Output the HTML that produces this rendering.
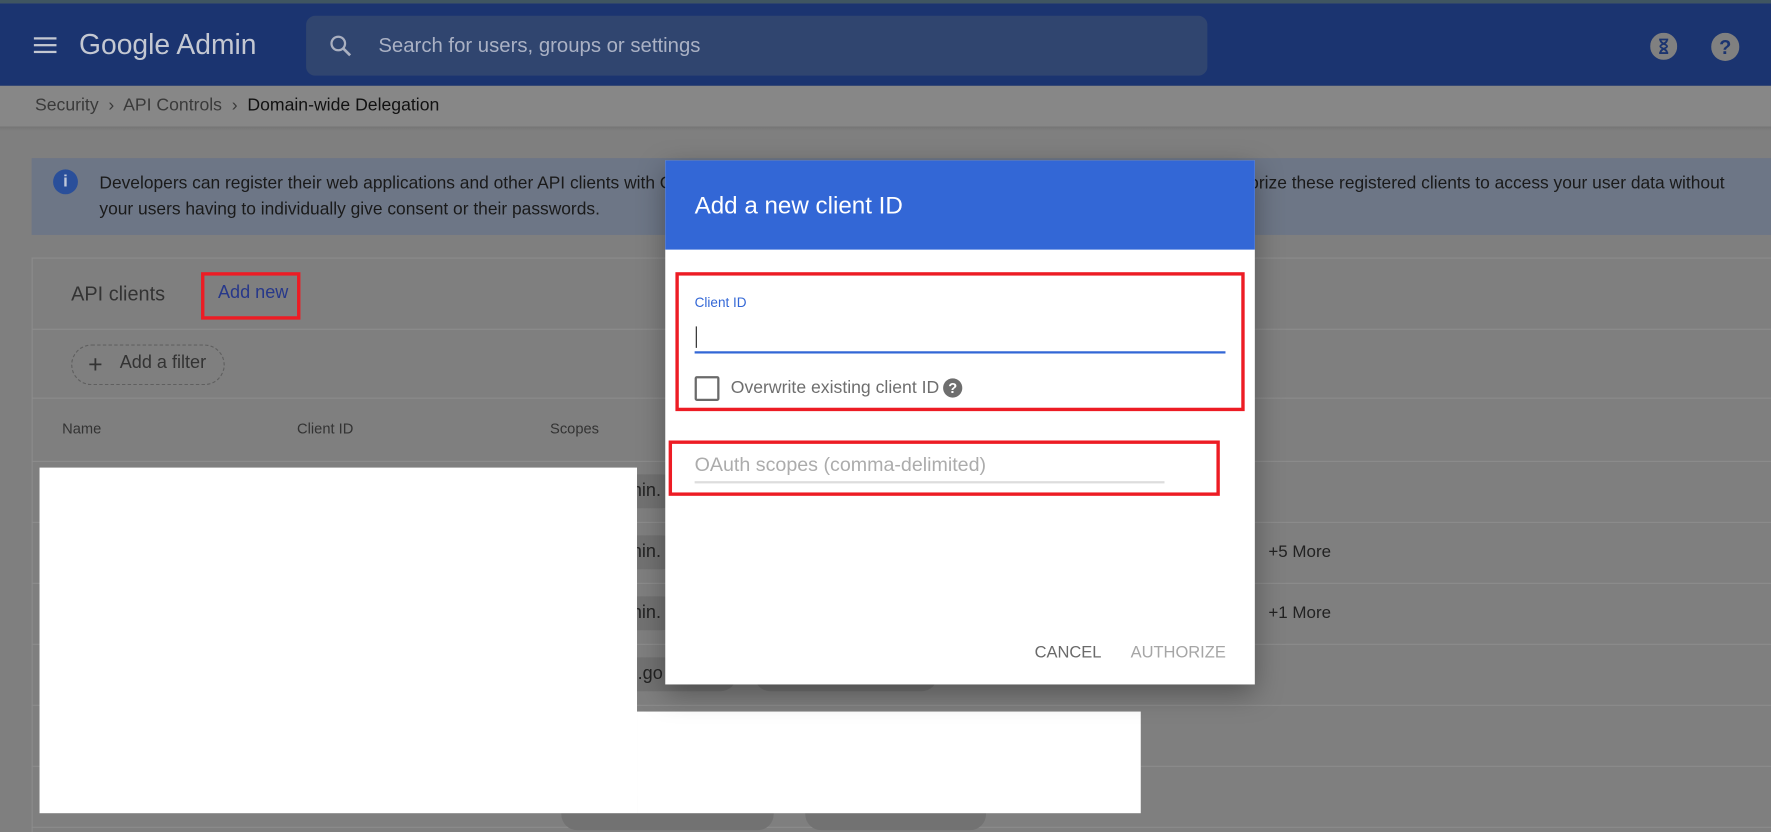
<!DOCTYPE html>
<html><head><meta charset="utf-8"><style>
html,body{margin:0;padding:0;width:1771px;height:832px;overflow:hidden;background:#7f7f7f;font-family:"Liberation Sans",Arial,sans-serif}
#s{position:absolute;left:0;top:0;width:1568px;height:737px;transform:scale(1.12946);transform-origin:0 0;background:#7f7f7f;overflow:hidden}
.a{position:absolute;white-space:nowrap}
.line{position:absolute;left:28px;right:0;height:1px;background:#8c8c8c}
.chip{position:absolute;background:#727272;border-radius:14px;height:30px}
.red{position:absolute;border:3px solid #ed1c24;box-sizing:border-box}
</style></head><body><div id="s">
<div class="a" style="left:0;top:0;width:1568px;height:3px;background:#3f5561"></div>
<div class="a" style="left:0;top:3px;width:1568px;height:73px;background:#1b3470"></div>
<div class="a" style="left:30px;top:33px;width:20px;height:2px;background:#c4c8d2;box-shadow:0 6px 0 #c4c8d2,0 12px 0 #c4c8d2"></div>
<div class="a" style="left:70px;top:26px;font-size:25px;color:#c4c8d2">Google Admin</div>
<div class="a" style="left:271px;top:14px;width:798px;height:53px;background:#30456f;border-radius:8px"></div>
<svg class="a" style="left:290px;top:29px" width="24" height="24" viewBox="0 0 24 24"><circle cx="9.5" cy="9.5" r="6" fill="none" stroke="#aab0c0" stroke-width="2"/><path d="M14 14l6 6" stroke="#aab0c0" stroke-width="2.4"/></svg>
<div class="a" style="left:335px;top:30px;font-size:18px;color:#aab1c4">Search for users, groups or settings</div>
<svg class="a" style="left:1461px;top:29px" width="24" height="24" viewBox="0 0 24 24"><circle cx="12" cy="12" r="12" fill="#808080"/><path d="M8 6h8M8 18h8M9 6c0 4 6 4 6 6s-6 2-6 6M15 6c0 4-6 4-6 6s6 2 6 6" stroke="#1b3470" stroke-width="1.6" fill="none"/></svg>
<svg class="a" style="left:1515px;top:29px" width="25" height="25" viewBox="0 0 24 24"><circle cx="12" cy="12" r="12" fill="#808080"/><text x="12" y="18" text-anchor="middle" font-size="17" font-weight="bold" fill="#1b3470" font-family="Liberation Sans">?</text></svg>
<div class="a" style="left:0;top:76px;width:1568px;height:36px;background:#878787"></div>
<div class="a" style="left:31px;top:85px;font-size:15.6px;color:#3a3a3a">Security &nbsp;›&nbsp; API Controls &nbsp;›&nbsp; <span style="color:#111">Domain-wide Delegation</span></div>
<div class="a" style="left:0;top:112px;width:1568px;height:4px;background:linear-gradient(#757575,#7f7f7f)"></div>
<div class="a" style="left:28px;top:140px;width:1540px;height:68px;background:#6d7686"></div>
<div class="a" style="left:47px;top:150px;width:22px;height:22px;border-radius:50%;background:#2a4f9a;color:#c0c8da;font-size:15px;font-weight:bold;text-align:center;line-height:22px">i</div>
<div class="a" style="left:88px;top:151px;font-size:15.4px;color:#1a1a1a;line-height:23px">Developers can register their web applications and other API clients with Google to enable access<br>your users having to individually give consent or their passwords.</div>
<div class="a" style="left:1106px;top:151px;font-size:15.4px;color:#1a1a1a;line-height:23px">orize these registered clients to access your user data without</div>
<div class="line" style="top:228px"></div>
<div class="a" style="left:28px;top:228px;width:1px;height:509px;background:#8c8c8c"></div>
<div class="a" style="left:63px;top:250px;font-size:17.6px;color:#333">API clients</div>
<div class="a" style="left:193px;top:251px;font-size:16px;color:#27388a">Add new</div>
<div class="red" style="left:178px;top:241px;width:88px;height:42px"></div>
<div class="line" style="top:291px"></div>
<div class="a" style="left:63px;top:305px;width:134px;height:34px;border:1px dashed #5f5f5f;border-radius:18px"></div>
<div class="a" style="left:78px;top:310px;font-size:22px;color:#333">+</div>
<div class="a" style="left:106px;top:313px;font-size:16px;color:#333">Add a filter</div>
<div class="line" style="top:352px"></div>
<div class="a" style="left:55px;top:372px;font-size:13px;color:#333">Name</div>
<div class="a" style="left:263px;top:372px;font-size:13px;color:#333">Client ID</div>
<div class="a" style="left:487px;top:372px;font-size:13px;color:#333">Scopes</div>
<div class="line" style="top:408px"></div>
<div class="line" style="top:462px"></div>
<div class="line" style="top:516px"></div>
<div class="line" style="top:570px"></div>
<div class="line" style="top:624px"></div>
<div class="line" style="top:678px"></div>
<div class="line" style="top:732px"></div>
<div class="chip" style="left:540px;top:420px;width:60px"></div>
<div class="chip" style="left:540px;top:474px;width:60px"></div>
<div class="chip" style="left:540px;top:528px;width:60px"></div>
<div class="chip" style="left:540px;top:582px;width:112px"></div>
<div class="chip" style="left:668px;top:582px;width:162px"></div>
<div class="chip" style="left:497px;top:705px;width:188px"></div>
<div class="chip" style="left:713px;top:705px;width:160px"></div>
<div class="a" style="left:555px;top:426px;font-size:16px;color:#222">min.</div>
<div class="a" style="left:555px;top:480px;font-size:16px;color:#222">min.</div>
<div class="a" style="left:555px;top:534px;font-size:16px;color:#222">min.</div>
<div class="a" style="left:561px;top:588px;font-size:16px;color:#222">l.go</div>
<div class="a" style="left:1123px;top:480px;font-size:15px;color:#222">+5 More</div>
<div class="a" style="left:1123px;top:534px;font-size:15px;color:#222">+1 More</div>
<div class="a" style="left:35px;top:414px;width:529px;height:306px;background:#fff"></div>
<div class="a" style="left:564px;top:630px;width:446px;height:90px;background:#fff"></div>
<div class="a" style="left:589px;top:142px;width:522px;height:464px;background:#fff;box-shadow:0 8px 24px rgba(0,0,0,.35)"></div>
<div class="a" style="left:589px;top:142px;width:522px;height:79px;background:#3367d6"></div>
<div class="a" style="left:615px;top:170px;font-size:21.4px;color:#fff">Add a new client ID</div>
<div class="red" style="left:598px;top:241px;width:504px;height:123px"></div>
<div class="a" style="left:615px;top:261px;font-size:12px;color:#3367d6">Client ID</div>
<div class="a" style="left:616px;top:289px;width:1px;height:19px;background:#222"></div>
<div class="a" style="left:615px;top:311px;width:470px;height:2px;background:#3367d6"></div>
<div class="a" style="left:615px;top:333px;width:22px;height:22px;border:2px solid #6a6a6a;border-radius:2px;box-sizing:border-box"></div>
<div class="a" style="left:647px;top:335px;font-size:15.6px;color:#6e6e6e">Overwrite existing client ID</div>
<div class="a" style="left:835px;top:335px;width:17px;height:17px;border-radius:50%;background:#6e6e6e;color:#fff;font-size:13px;font-weight:bold;text-align:center;line-height:17px">?</div>
<div class="red" style="left:592px;top:390px;width:488px;height:49px"></div>
<div class="a" style="left:615px;top:401px;font-size:17.4px;color:#acacac">OAuth scopes (comma-delimited)</div>
<div class="a" style="left:615px;top:426px;width:416px;height:2px;background:#ddd"></div>
<div class="a" style="left:916px;top:570px;font-size:14.6px;color:#6a6a6a">CANCEL</div>
<div class="a" style="left:1001px;top:570px;font-size:14.6px;color:#a6a6a6">AUTHORIZE</div>
</div></body></html>
